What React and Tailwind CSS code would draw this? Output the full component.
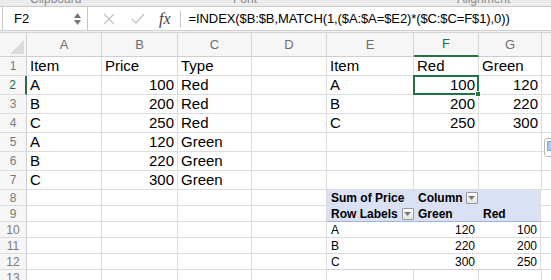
import React from "react";

const W = [27, 75, 76, 74, 75, 87, 65, 63];
const cols = ["A", "B", "C", "D", "E", "F", "G"];

const font = { fontFamily: '"Liberation Sans", Arial, sans-serif' };

function Cell({ w, h, children, right, className = "" }) {
  return (
    <div
      className={`shrink-0 border-r border-b border-[#dcdcdc] flex items-center overflow-visible whitespace-nowrap ${right ? "justify-end pr-[3px]" : "pl-[3px]"} ${className}`}
      style={{ width: w, height: h }}
    >
      {children}
    </div>
  );
}

function RowHead({ n, h, active }) {
  return (
    <div
      className={`shrink-0 w-[27px] bg-[#f6f6f6] border-b border-[#dcdcdc] flex items-center justify-center text-[12px] ${active ? "text-[#217346] border-r-2 border-r-[#217346]" : "text-[#7a7a7a] border-r border-r-[#cfcfcf]"}`}
      style={{ height: h }}
    >
      {n}
    </div>
  );
}

function Drop({ className = "" }) {
  return (
    <span className={`inline-flex shrink-0 items-center justify-center w-[12px] h-[12px] border border-[#9a9a9a] bg-gradient-to-b from-white to-[#e4e4e4] rounded-[1px] ${className}`}>
      <svg width="7" height="4" viewBox="0 0 7 4"><path d="M0 0h7L3.5 4z" fill="#7a7a7a" /></svg>
    </span>
  );
}

const data = [
  ["Item", "Price", "Type", "", "Item", "Red", "Green"],
  ["A", "100", "Red", "", "A", "100", "120"],
  ["B", "200", "Red", "", "B", "200", "220"],
  ["C", "250", "Red", "", "C", "250", "300"],
  ["A", "120", "Green", "", "", "", ""],
  ["B", "220", "Green", "", "", "", ""],
  ["C", "300", "Green", "", "", "", ""],
];

const numeric = (r, c) => r > 0 && (c === 1 || c === 5 || c === 6);

export default function App() {
  return (
    <div className="w-[551px] h-[280px] overflow-hidden bg-white relative" style={font}>
      {/* ribbon remnant */}
      <div className="h-[7px] bg-[#ececec] border-b border-[#c9c9c9] relative overflow-hidden text-[12px] text-[#8a8a8a] whitespace-nowrap">
        <span className="absolute left-[30px] top-[-10px]">Clipboard</span>
        <span className="absolute left-[233px] top-[-10px]">Font</span>
        <span className="absolute left-[457px] top-[-10px]">Alignment</span>
      </div>
      {/* formula bar */}
      <div className="h-[24px] flex items-stretch bg-white border-b border-[#cfcfcf]">
        <div className="ml-[2px] w-[86px] border-l border-r border-[#c6c6c6] flex items-center justify-between pl-[11px] pr-[6px]">
          <span className="text-[13px] text-black">F2</span>
          <span className="flex flex-col gap-[2px]">
            <svg width="7" height="5" viewBox="0 0 7 5"><path d="M3.5 0L7 5H0z" fill="#777" /></svg>
            <svg width="7" height="5" viewBox="0 0 7 5"><path d="M0 0h7L3.5 5z" fill="#777" /></svg>
          </span>
        </div>
        <div className="flex items-center pl-[14px] whitespace-nowrap">
          <svg width="12" height="12" viewBox="0 0 12 12" className="ml-[1px]"><path d="M1 1l10 10M11 1L1 11" stroke="#c4c4c4" strokeWidth="1.4" /></svg>
          <svg width="14" height="11" viewBox="0 0 14 11" className="ml-[16px]"><path d="M1 6l4 4 8-9" stroke="#c4c4c4" strokeWidth="1.4" fill="none" /></svg>
          <span className="ml-[14px] text-[16px] italic text-[#444]" style={{ fontFamily: '"Liberation Serif", serif' }}>fx</span>
          <span className="ml-[9px] w-px h-[16px] bg-[#c9c9c9]" />
          <span className="ml-[8px] text-[13px] text-black tracking-[-0.1px]">=INDEX($B:$B,MATCH(1,($A:$A=$E2)*($C:$C=F$1),0))</span>
        </div>
      </div>
      <div className="h-[2px] bg-[#f1f1f1] border-b border-[#d4d4d4]" />
      {/* column headers */}
      <div className="flex h-[24px] bg-[#f6f6f6]">
        <div className="shrink-0 w-[27px] border-r border-b border-[#cfcfcf] relative">
          <svg width="14" height="14" viewBox="0 0 14 14" className="absolute right-[2px] bottom-[2px]"><path d="M14 0V14H0z" fill="#dcdcdc" /></svg>
        </div>
        {cols.map((c, i) => (
          <div
            key={c}
            className={`shrink-0 flex items-center justify-center text-[13px] border-r border-[#d6d6d6] ${c === "F" ? "text-[#217346] border-b-2 border-b-[#217346]" : "text-[#6e6e6e] border-b border-b-[#cfcfcf]"}`}
            style={{ width: W[i + 1] }}
          >
            {c}
          </div>
        ))}
        <div className="flex-1 border-b border-[#cfcfcf]" />
      </div>
      {/* rows 1-7 */}
      {data.map((row, r) => (
        <div key={r} className="flex text-[15px] text-black">
          <RowHead n={r + 1} h={19} active={r === 1} />
          {row.map((v, c) => (
            <Cell key={c} w={W[c + 1]} h={19} right={numeric(r, c)} className={r === 1 && c === 5 ? "relative" : ""}>
              {v}
              {r === 1 && c === 5 && (
                <>
                  <span className="absolute left-[-1px] top-[-1px] w-[66px] h-[20px] border-2 border-[#217346]" />
                  <span className="absolute right-[-3px] bottom-[-3px] w-[6px] h-[6px] bg-[#217346] border border-white" />
                </>
              )}
            </Cell>
          ))}
          <div className="flex-1 border-b border-[#dcdcdc]" style={{ height: 19 }} />
        </div>
      ))}
      {/* rows 8-9 pivot header */}
      <div className="flex text-[12px] text-black">
        <RowHead n={8} h={16} />
        {[0, 1, 2, 3].map((c) => (
          <Cell key={c} w={W[c + 1]} h={16} />
        ))}
        <div className="flex h-[16px] bg-[#dae1f4] font-bold whitespace-nowrap">
          <div className="w-[87px] pl-[4px] flex items-center">Sum of Price</div>
          <div className="w-[65px] pl-[4px] flex items-center">
            Column
            <Drop className="ml-[3px] relative z-10 font-normal" />
          </div>
          <div className="w-[62px] border-r border-[#dcdcdc]" />
        </div>
        <div className="flex-1 border-b border-[#dcdcdc]" style={{ height: 16 }} />
      </div>
      <div className="flex text-[12px] text-black">
        <RowHead n={9} h={16} />
        {[0, 1, 2, 3].map((c) => (
          <Cell key={c} w={W[c + 1]} h={16} />
        ))}
        <div className="flex h-[16px] bg-[#dae1f4] font-bold border-b border-[#9fb3e3] whitespace-nowrap">
          <div className="w-[87px] pl-[4px] flex items-center">
            Row Labels
            <Drop className="ml-[4px]" />
          </div>
          <div className="w-[65px] pl-[4px] flex items-center">Green</div>
          <div className="w-[62px] pl-[4px] flex items-center border-r border-[#dcdcdc]">Red</div>
        </div>
        <div className="flex-1 border-b border-[#dcdcdc]" style={{ height: 16 }} />
      </div>
      {/* rows 10-12 pivot data */}
      {[
        ["A", "120", "100"],
        ["B", "220", "200"],
        ["C", "300", "250"],
      ].map((p, i) => (
        <div key={i} className="flex text-[12px] text-black">
          <RowHead n={10 + i} h={16} />
          {[0, 1, 2, 3].map((c) => (
            <Cell key={c} w={W[c + 1]} h={16} />
          ))}
          <div className={`flex h-[16px] ${i < 2 ? "border-b border-[#dcdcdc]" : "border-b border-[#d0d0d0]"}`}>
            <div className="w-[87px] pl-[4px] flex items-center">{p[0]}</div>
            <div className="w-[65px] pr-[4px] flex items-center justify-end">{p[1]}</div>
            <div className="w-[62px] pr-[3px] flex items-center justify-end border-r border-[#dcdcdc]">{p[2]}</div>
          </div>
          <div className="flex-1 border-b border-[#dcdcdc]" style={{ height: 16 }} />
        </div>
      ))}
      {/* row 13 */}
      <div className="flex text-[12px]">
        <RowHead n={13} h={16} />
        {W.slice(1).map((w, c) => (
          <Cell key={c} w={w} h={16} />
        ))}
        <div className="flex-1 border-b border-[#dcdcdc]" style={{ height: 16 }} />
      </div>
      {/* quick analysis button */}
      <div className="absolute left-[544px] top-[138px] w-[16px] h-[19px] rounded-[3px] border border-[#b8b8b8] bg-white p-[2px]">
        <div className="w-full h-[10px] bg-[#a9c8ef] border border-[#7fa6d9]" />
      </div>
    </div>
  );
}
